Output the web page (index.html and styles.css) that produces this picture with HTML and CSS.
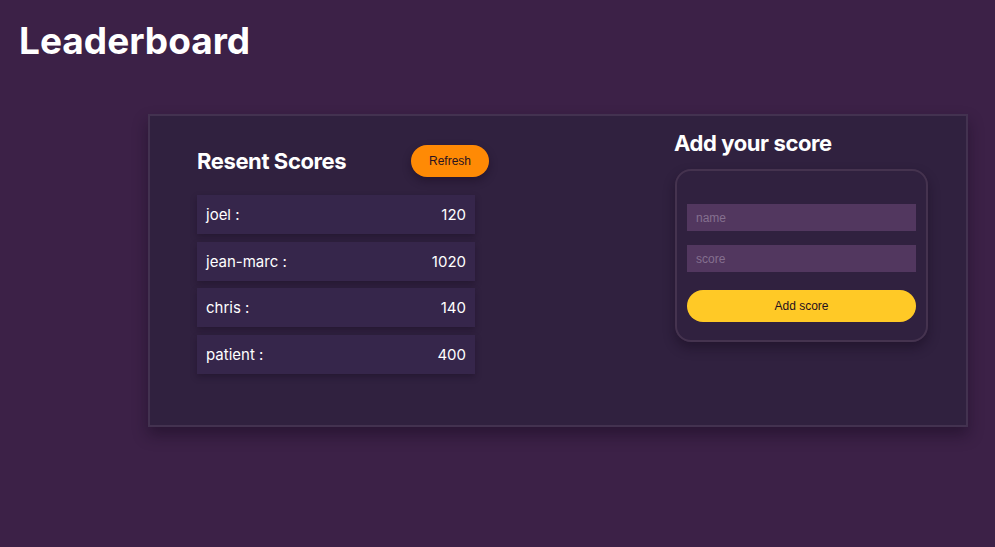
FILE: index.html
```html
<!DOCTYPE html>
<html>
<head>
<meta charset="utf-8">
<title>Leaderboard</title>
<link rel="stylesheet" href="styles.css">
</head>
<body>
<h1 class="title">Leaderboard</h1>
<main class="board">
  <section class="recent">
    <div class="recent-head">
      <h2 class="section-title">Resent Scores</h2>
      <button class="refresh" type="button">Refresh</button>
    </div>
    <ul class="scores">
      <li class="score-row"><span>joel :</span><span>120</span></li>
      <li class="score-row"><span>jean-marc :</span><span>1020</span></li>
      <li class="score-row"><span>chris :</span><span>140</span></li>
      <li class="score-row"><span>patient :</span><span>400</span></li>
    </ul>
  </section>
  <section class="add">
    <h2 class="section-title add-title">Add your score</h2>
    <form class="add-form">
      <input class="field" type="text" placeholder="name">
      <input class="field" type="text" placeholder="score">
      <button class="submit" type="button">Add score</button>
    </form>
  </section>
</main>
</body>
</html>
```

FILE: styles.css
```css
* { box-sizing: border-box; }

body {
  margin: 0;
  background: #3c2147;
  font-family: "Inter", "Open Sans", sans-serif;
  color: #fff;
  min-height: 547px;
}

.title {
  margin: 0;
  padding: 19px 0 0 19px;
  font-size: 37px;
  font-weight: 700;
  letter-spacing: 0;
  line-height: 44px;
  height: 114px;
}

.board {
  margin-left: 148px;
  width: 820px;
  height: 313px;
  background: #30213f;
  border: 2px solid #433250;
  box-shadow: 0 8px 14px rgba(20, 8, 28, 0.45);
  display: flex;
  justify-content: space-between;
  padding: 29px 38px 0 47px;
}

.recent { width: 292px; }

.recent-head {
  display: flex;
  justify-content: space-between;
  align-items: center;
  height: 32px;
  margin-bottom: 18px;
}

.section-title {
  margin: 0;
  font-size: 22px;
  font-weight: 700;
  letter-spacing: -0.4px;
}

.refresh {
  width: 78px;
  height: 32px;
  border: none;
  border-radius: 16px;
  background: #ff8a05;
  color: #2a1220;
  font-family: "Liberation Sans", Arial, sans-serif;
  font-size: 12px;
  box-shadow: 0 4px 8px rgba(20, 8, 28, 0.4);
}

.scores {
  list-style: none;
  margin: 0;
  padding: 0;
  width: 278px;
  display: flex;
  flex-direction: column;
  gap: 7.5px;
}

.score-row {
  display: flex;
  justify-content: space-between;
  align-items: center;
  height: 39px;
  padding: 0 9px;
  background: #36264b;
  font-size: 15px;
  box-shadow: 0 3px 6px rgba(20, 8, 28, 0.35);
}

.add { width: 253px; margin-top: -20px; }

.add-title {
  margin-left: -1px;
  height: 36px;
  line-height: 36px;
}

.add-form {
  margin-top: 8px;
  height: 173px;
  border: 2px solid #45334f;
  border-radius: 16px;
  padding: 33px 10px 0 10px;
  display: flex;
  flex-direction: column;
  box-shadow: 0 6px 12px rgba(20, 8, 28, 0.45);
}

.field {
  height: 27px;
  border: none;
  background: #52375f;
  padding: 0 9px;
  font-family: "Liberation Sans", Arial, sans-serif;
  font-size: 12px;
  color: #fff;
  margin-bottom: 14px;
  outline: none;
}

.field::placeholder { color: #85708f; }

.submit {
  margin-top: 4px;
  height: 32px;
  border: none;
  border-radius: 16px;
  background: #ffc926;
  color: #1f1020;
  font-family: "Liberation Sans", Arial, sans-serif;
  font-size: 12px;
}
```
